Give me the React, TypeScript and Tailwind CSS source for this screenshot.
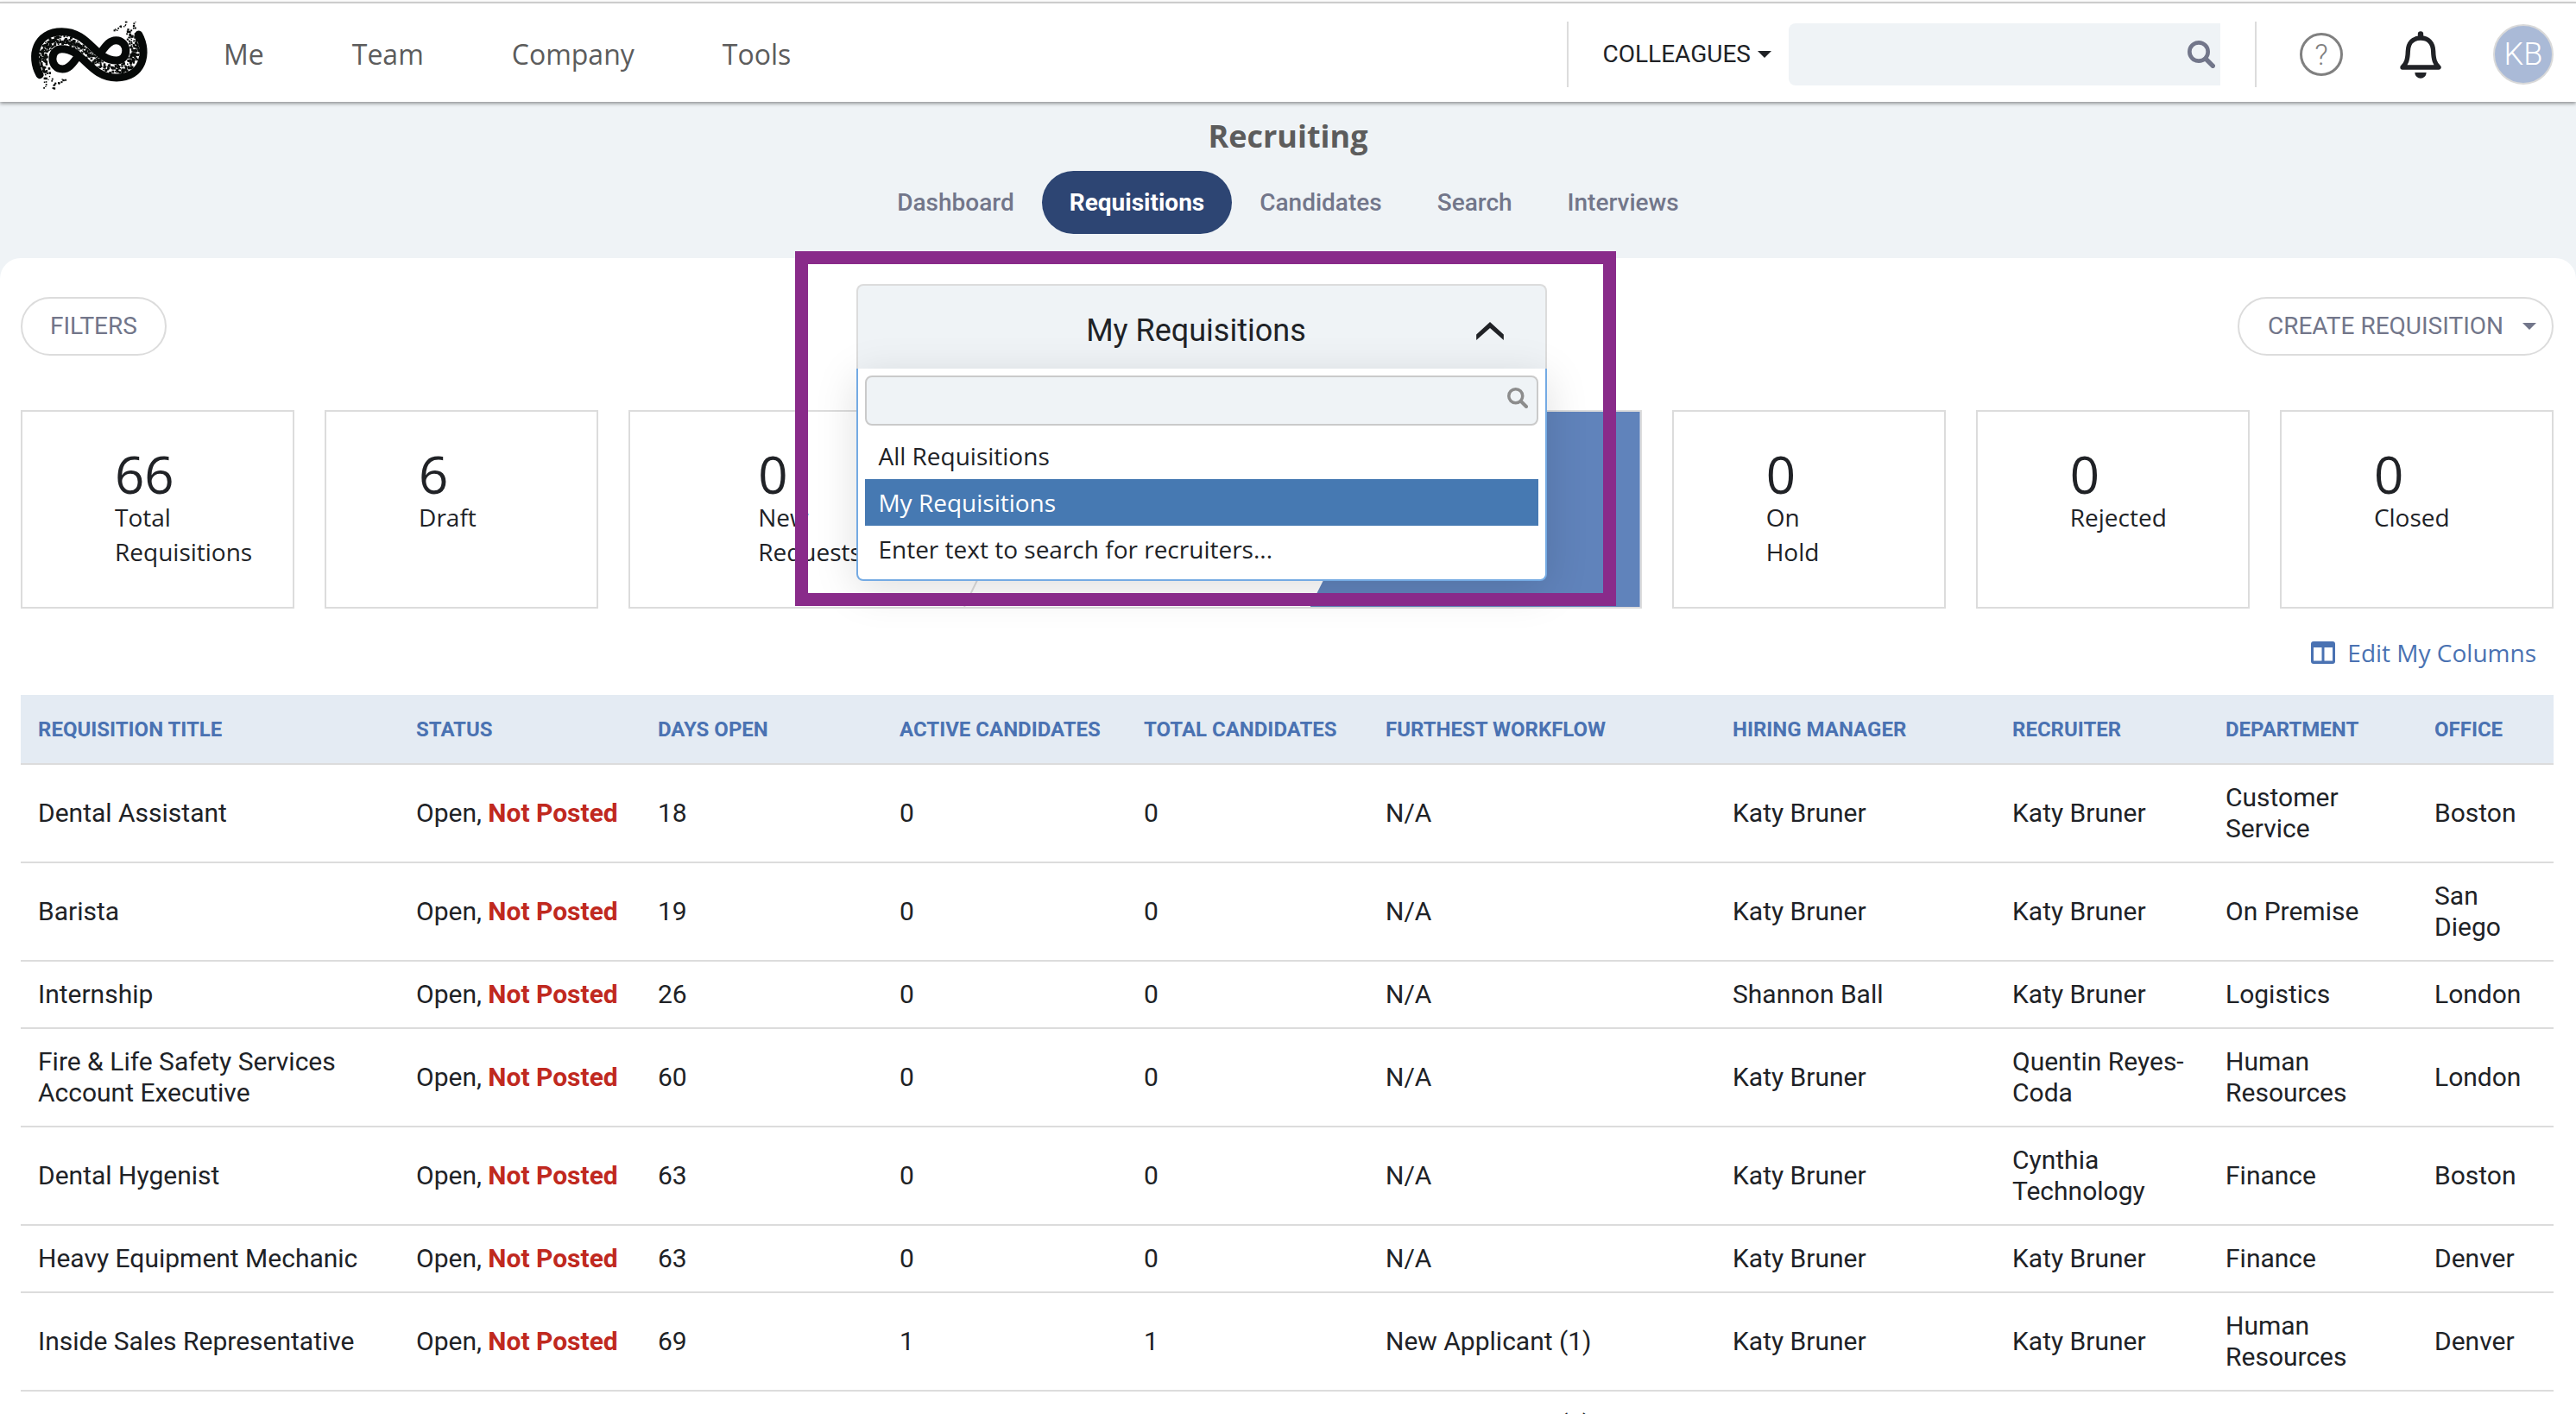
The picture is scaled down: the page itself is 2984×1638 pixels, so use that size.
import React from "react";

const columns: [string, string][] = [
  ["Requisition Title", "w-[438px]"],
  ["Status", "w-[280px]"],
  ["Days Open", "w-[280px]"],
  ["Active Candidates", "w-[283px]"],
  ["Total Candidates", "w-[280px]"],
  ["Furthest Workflow", "w-[402px]"],
  ["Hiring Manager", "w-[324px]"],
  ["Recruiter", "w-[247px]"],
  ["Department", "w-[242px]"],
  ["Office", "w-[158px]"],
];

const rows: string[][] = [
  ["Dental Assistant", "18", "0", "0", "N/A", "Katy Bruner", "Katy Bruner", "Customer Service", "Boston"],
  ["Barista", "19", "0", "0", "N/A", "Katy Bruner", "Katy Bruner", "On Premise", "San Diego"],
  ["Internship", "26", "0", "0", "N/A", "Shannon Ball", "Katy Bruner", "Logistics", "London"],
  ["Fire & Life Safety Services Account Executive", "60", "0", "0", "N/A", "Katy Bruner", "Quentin Reyes-Coda", "Human Resources", "London"],
  ["Dental Hygenist", "63", "0", "0", "N/A", "Katy Bruner", "Cynthia Technology", "Finance", "Boston"],
  ["Heavy Equipment Mechanic", "63", "0", "0", "N/A", "Katy Bruner", "Katy Bruner", "Finance", "Denver"],
  ["Inside Sales Representative", "69", "1", "1", "New Applicant (1)", "Katy Bruner", "Katy Bruner", "Human Resources", "Denver"],
  ["Photographer", "70", "1", "1", "New Applicant (1)", "Katy Bruner", "Katy Bruner", "Finance", "Boston"],
];

type Speck = { x: number; y: number; s: number };

/* Specks that fill the logo's middle band and scatter at its two ends. */
const specks: Speck[] = (() => {
  let seed = 11;
  const rand = () => (seed = (seed * 16807) % 2147483647) / 2147483647;
  const out: Speck[] = [];
  const band = [
    [[138, 232], [100, 180], [120, 109], [190, 109]],
    [[190, 109], [260, 109], [300, 211], [370, 211]],
    [[370, 211], [440, 211], [460, 140], [422, 88]],
  ];
  for (const p of band) {
    for (let i = 0; i < 150; i++) {
      const t = rand();
      const u = 1 - t;
      const at = (k: number) =>
        u * u * u * p[0][k] + 3 * u * u * t * p[1][k] + 3 * u * t * t * p[2][k] + t * t * t * p[3][k];
      out.push({ x: at(0) - 4 + (rand() - 0.5) * 28, y: at(1) - 4 + (rand() - 0.5) * 28, s: 4 + rand() * 5 });
    }
  }
  for (let i = 0; i < 22; i++) {
    const dx = (rand() - 0.5) * 76;
    const dy = rand() * 34;
    out.push({ x: 402 + dx, y: 78 - dy, s: 3 + rand() * 4 });
    out.push({ x: 158 - dx, y: 240 + dy, s: 3 + rand() * 4 });
  }
  return out;
})();

function Logo() {
  const strand = "M108 230C72 165 95 80 185 80C280 80 300 180 375 180C420 180 417 110 373 110C345 110 332 140 318 155";
  return (
    <svg viewBox="60 30 441 261" className="h-[87px] w-[147px] shrink-0" role="img" aria-label="Company logo">
      {specks.map((k, i) => (
        <rect key={i} x={k.x} y={k.y} width={k.s} height={k.s} fill="#0a0d0b" />
      ))}
      <g fill="none" stroke="#060908" strokeWidth="27" strokeLinecap="round">
        <path d={strand} />
        <path d={strand} transform="rotate(180 280 160)" />
      </g>
    </svg>
  );
}

function SearchIcon({ className }: { className: string }) {
  return (
    <svg viewBox="0 0 96 96" className={className} fill="none" stroke="currentColor" aria-hidden="true">
      <circle cx="39" cy="39" r="32" strokeWidth="14" />
      <path d="M63 63L88 88" strokeWidth="16" strokeLinecap="round" />
    </svg>
  );
}

function BellIcon() {
  return (
    <svg viewBox="0 0 144 165" className="h-[55px] w-12" aria-hidden="true">
      <g fill="none" stroke="#202226" strokeLinejoin="round" strokeLinecap="round">
        <path strokeWidth="16" d="M9 126C22 113 27 100 28 70C29 42 45 24 72 24C99 24 115 42 116 70C117 100 122 113 135 126Z" />
        <path strokeWidth="19" d="M72 10V18" />
      </g>
      <path d="M52 144H92A20 20 0 0 1 52 144Z" fill="#202226" />
    </svg>
  );
}

function Header() {
  return (
    <header className="relative z-10 mt-0.5 flex h-[116px] shrink-0 items-center border-t-2 border-[#cccccc] bg-white pt-1 pr-[26px] pl-[30px] shadow-[0_2px_4px_rgba(0,0,0,0.4)]">
      <Logo />
      <nav aria-label="Main" className="ml-[82px] flex gap-[102px] text-[32px] text-[#5c5c5c]">
        <a href="#me">Me</a>
        <a href="#team">Team</a>
        <a href="#company">Company</a>
        <a href="#tools">Tools</a>
      </nav>
      <div className="ml-auto flex items-center">
        <div className="h-[76px] w-0.5 bg-[#dcdcdc]" />
        <button className="ml-10 flex items-center gap-2 font-['Roboto',sans-serif] text-[28px] text-[#202226]">
          COLLEAGUES
          <svg viewBox="0 0 16 8" className="h-2 w-4" aria-hidden="true">
            <path d="M0 0H16L8 8Z" fill="currentColor" />
          </svg>
        </button>
        <div className="ml-5 flex h-[72px] w-[500px] items-center rounded-l-lg bg-[#eff3f6] pr-1.5">
          <input type="search" aria-label="Search colleagues" className="h-full min-w-0 flex-1 bg-transparent px-4 text-[28px] outline-none" />
          <button aria-label="Search" className="text-[#72768a]">
            <SearchIcon className="size-8" />
          </button>
        </div>
        <div className="ml-10 h-[76px] w-0.5 bg-[#dcdcdc]" />
        <button
          aria-label="Help"
          className="ml-[50px] flex size-[50px] items-center justify-center rounded-full border-[3px] border-[#808080] font-['Roboto',sans-serif] text-[34px] leading-none font-light text-[#808080]"
        >
          ?
        </button>
        <button aria-label="Notifications" className="ml-[66px]">
          <BellIcon />
        </button>
        <button
          aria-label="Account"
          className="ml-[60px] flex size-[70px] items-center justify-center rounded-full border-2 border-[#d9d9d9] bg-[#aabad7] font-['Roboto',sans-serif] text-[36px] font-light text-white"
        >
          KB
        </button>
      </div>
    </header>
  );
}

function Tabs() {
  const tabs = ["Dashboard", "Requisitions", "Candidates", "Search", "Interviews"];
  return (
    <nav aria-label="Recruiting" className="mt-4 flex justify-center font-['Roboto',sans-serif] text-[28px]">
      {tabs.map((t) => (
        <a
          key={t}
          href={"#" + t.toLowerCase()}
          aria-current={t === "Requisitions" ? "page" : undefined}
          className={
            t === "Requisitions"
              ? "flex h-[73px] items-center rounded-full bg-[#2d4573] px-8 font-bold text-white"
              : "flex h-[73px] items-center px-8 font-medium text-[#72768a]"
          }
        >
          {t}
        </a>
      ))}
    </nav>
  );
}

function RecruiterPicker() {
  const option = "flex h-[54px] w-full items-center px-[15px] text-left";
  return (
    <div className="relative z-20 w-[800px]">
      <button
        aria-expanded="true"
        className="flex h-[98px] w-full items-center rounded-t-lg border-2 border-b-0 border-[#dcdcdc] bg-[#eff3f6] pt-2 pr-[48px] pl-[66px] font-['Roboto',sans-serif] text-[36px] text-[#202226]"
      >
        <span className="flex-1 text-center">My Requisitions</span>
        <svg viewBox="0 0 92 61" className="h-[21px] w-8" aria-hidden="true">
          <path d="M46 0L92 42V61L46 20L0 61V42Z" fill="currentColor" />
        </svg>
      </button>
      <div className="absolute top-full left-0 w-full rounded-b-lg border-2 border-t-0 border-[#74aae3] bg-white p-2 text-[28px] text-[#202226] shadow-[0_10px_50px_rgba(0,0,0,0.13)]">
        <div className="flex h-[58px] items-center rounded-lg border-2 border-[#cacaca] bg-[#eff3f6] pr-2.5">
          <input type="search" aria-label="Search recruiters" className="h-full min-w-0 flex-1 bg-transparent px-3 outline-none" />
          <SearchIcon className="mb-1.5 size-6 text-[#8c8c8c]" />
        </div>
        <ul className="mt-2">
          <li>
            <button className={option}>All Requisitions</button>
          </li>
          <li>
            <button className={option + " bg-[#4679b2] text-white"}>My Requisitions</button>
          </li>
          <li>
            <button className={option}>Enter text to search for recruiters...</button>
          </li>
        </ul>
      </div>
      <div className="pointer-events-none absolute -top-[38px] -left-[71px] h-[411px] w-[951px] border-[15px] border-[#892b8a]" />
    </div>
  );
}

function Count({ value, label }: { value: string; label: string }) {
  return (
    <div className="w-min text-[#202226]">
      <div className="text-[60px] leading-[60px]">{value}</div>
      <div className="text-[28px] leading-10">{label}</div>
    </div>
  );
}

function Card({ value, label }: { value: string; label: string }) {
  return (
    <div className="border-2 border-[#dcdcdc] pt-[42px] pl-[107px]">
      <Count value={value} label={label} />
    </div>
  );
}

function Summary() {
  return (
    <section
      aria-label="Requisition counts"
      className="mt-12 grid h-[230px] grid-cols-[317fr_317fr_1173fr_317fr_317fr_317fr] gap-[35px]"
    >
      <Card value="66" label="Total Requisitions" />
      <Card value="6" label="Draft" />
      <div className="grid grid-cols-[386fr_401fr_382fr] border-2 border-[#dcdcdc]">
        <div className="pt-[42px] pl-[148px]">
          <Count value="0" label="New Requests" />
        </div>
        <svg viewBox="0 0 57 226" className="h-[226px] w-[57px]" fill="none" aria-hidden="true">
          <path d="M1 0L56 113L1 226" stroke="#dcdcdc" strokeWidth="2" />
        </svg>
        <div className="bg-[#6083bb] [clip-path:polygon(0_0,100%_0,100%_100%,0_100%,57px_50%)]" />
      </div>
      <Card value="0" label="On Hold" />
      <Card value="0" label="Rejected" />
      <Card value="0" label="Closed" />
    </section>
  );
}

function RequisitionTable() {
  const cell = "border-b-2 border-[#dcdcdc] px-5 py-5 align-middle";
  return (
    <table className="w-full table-fixed border-separate border-spacing-0 text-left font-['Roboto',sans-serif] text-[30px] leading-9 text-[#202226]">
      <thead>
        <tr>
          {columns.map(([name, width]) => (
            <th
              key={name}
              scope="col"
              className={"h-[81px] border-b-2 border-[#dcdcdc] bg-[#e4ebf3] px-5 text-[24px] font-bold whitespace-nowrap text-[#4a72b2] uppercase " + width}
            >
              {name}
            </th>
          ))}
        </tr>
      </thead>
      <tbody>
        {rows.map(([title, ...rest]) => (
          <tr key={title}>
            <td className={cell}>{title}</td>
            <td className={cell + " whitespace-nowrap"}>
              Open, <strong className="font-bold text-[#c0291f]">Not Posted</strong>
            </td>
            {rest.map((v, i) => (
              <td key={i} className={cell}>
                {v}
              </td>
            ))}
          </tr>
        ))}
      </tbody>
    </table>
  );
}

export default function App() {
  const pill = "flex h-[68px] items-center rounded-full border-2 border-[#dcdcdc] font-['Roboto',sans-serif] text-[28px] text-[#72768a]";
  return (
    <div className="flex h-screen flex-col overflow-hidden bg-white font-['Open_Sans',sans-serif]">
      <Header />
      <div className="flex-1 bg-[#eff3f6] pt-4">
        <h1 className="text-center text-[36px] leading-[48px] font-bold text-[#5c5c5c]">Recruiting</h1>
        <Tabs />
        <main className="mt-7 rounded-t-3xl bg-white pt-[30px] pr-[26px] pl-6">
          <div className="flex h-[98px] items-center justify-between">
            <button className={pill + " px-8"}>FILTERS</button>
            <RecruiterPicker />
            <button className={pill + " gap-[22px] pr-[18px] pl-[33px]"}>
              CREATE REQUISITION
              <svg viewBox="0 0 16 8" className="h-2 w-4" aria-hidden="true">
                <path d="M0 0H16L8 8Z" fill="currentColor" />
              </svg>
            </button>
          </div>
          <Summary />
          <div className="mt-[31px] mb-[29px] flex justify-end pr-5">
            <a href="#columns" className="flex items-center gap-3.5 text-[28px] leading-10 text-[#4a72b2]">
              <svg viewBox="0 0 28 26" className="h-[26px] w-7" aria-hidden="true">
                <rect width="28" height="26" rx="3" fill="currentColor" />
                <path d="M3 7H12.500V22.500H3ZM15.500 7H25V22.500H15.500Z" fill="#fff" />
              </svg>
              Edit My Columns
            </a>
          </div>
          <RequisitionTable />
        </main>
      </div>
    </div>
  );
}
